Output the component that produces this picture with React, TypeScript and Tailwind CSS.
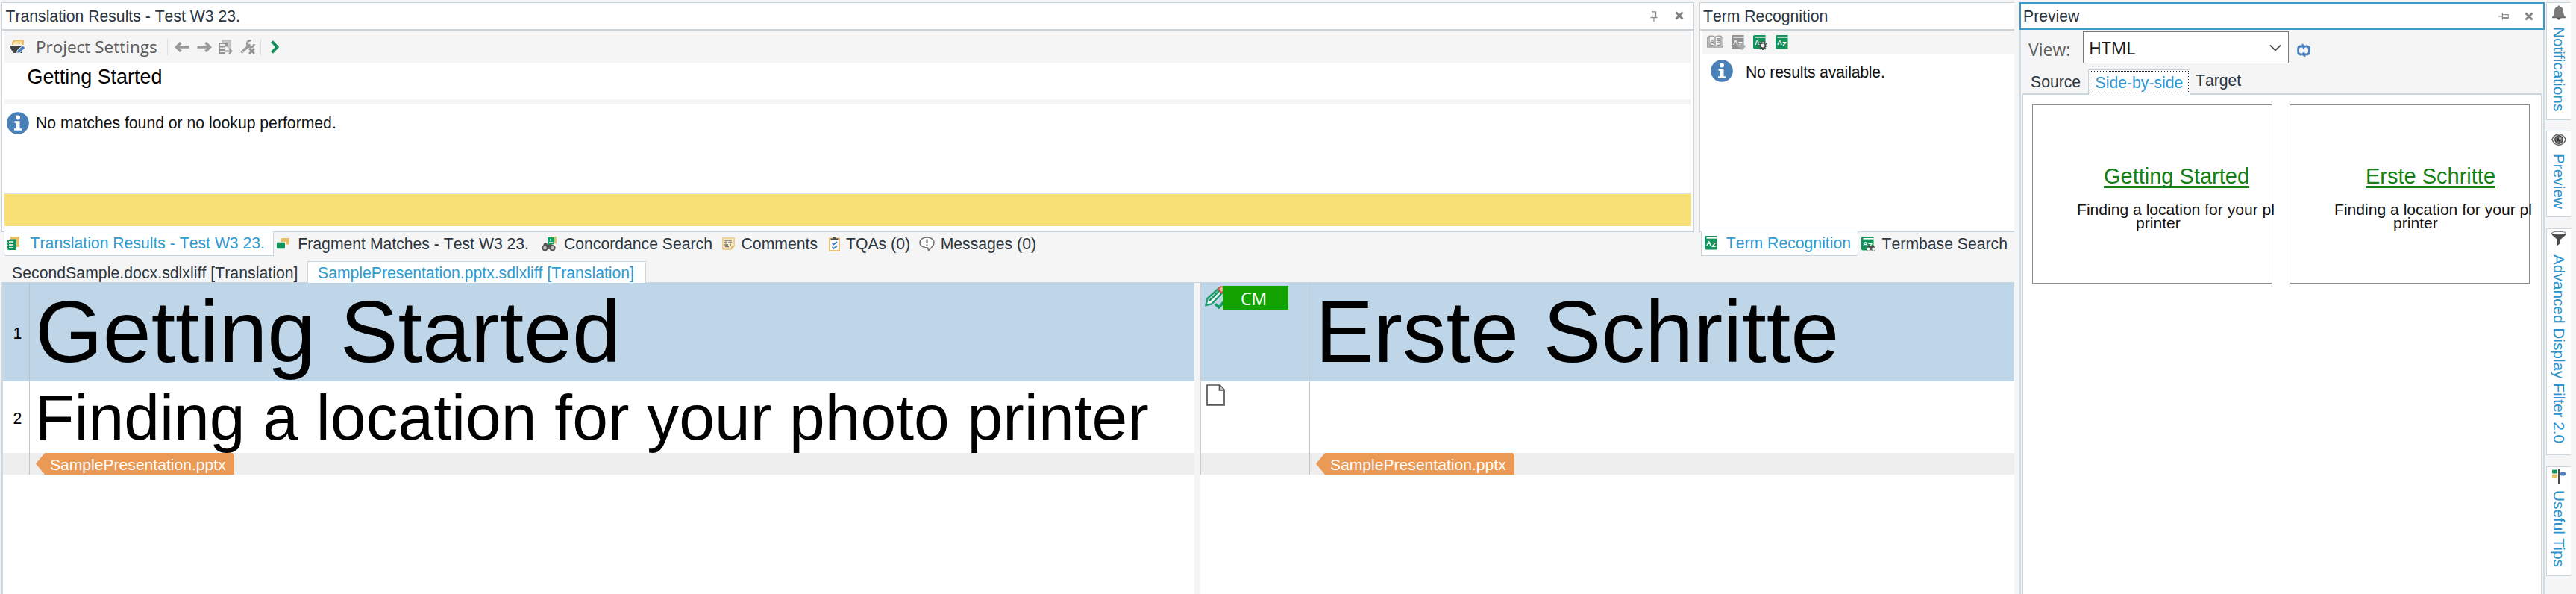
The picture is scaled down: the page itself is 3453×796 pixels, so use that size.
import React from "react";

const ARIAL = "font-['Liberation_Sans',Arial,sans-serif]";
const SEGOE = "font-['Open_Sans','Noto_Sans',sans-serif]";

function Info() {
  return (
    <svg width="30" height="30" viewBox="0 0 30 30" className="shrink-0">
      <circle cx="15" cy="15" r="14.8" fill="#4a80b8" />
      <circle cx="15" cy="7.6" r="3" fill="#fff" />
      <path d="M10.5 12.2h7v10h2.8v2.6H10v-2.6h3v-7.4h-2.5z" fill="#fff" />
    </svg>
  );
}

function Cross() {
  return (
    <svg width="12" height="12" viewBox="0 0 12 12" className="shrink-0">
      <path d="M1.5 1.5l9 9M10.5 1.5l-9 9" stroke="#828282" strokeWidth="3" />
    </svg>
  );
}

function Pin({ side }: { side?: boolean }) {
  return (
    <svg width="14" height="14" viewBox="0 0 14 14" className={side ? "shrink-0 rotate-90" : "shrink-0"}>
      <path d="M4 .8h6M4.6 .8v7.4M8.5 .8v7.4M9.6 .8v7.4M2.5 8.6h9M7 8.6V14" stroke="#8a8a8a" strokeWidth="1.2" fill="none" />
    </svg>
  );
}

function Folder() {
  return (
    <svg width="21" height="20" viewBox="0 0 21 20" className="shrink-0">
      <path d="M4 7V4l2-2.5h12V7" fill="#fbefcf" stroke="#e6bd5e" strokeWidth="1.8" />
      <path d="M5 4.5h12" stroke="#e6bd5e" strokeWidth="1.4" />
      <path d="M0 8h19l-3 10H5.500Q2 15 0 8z" fill="#454545" />
      <path d="M9.500 18.500l1-4.500 7-6 3.500 3-7.500 6.800z" fill="#4a80c0" stroke="#f5f5f5" strokeWidth="1" />
    </svg>
  );
}

function Arrow({ right }: { right?: boolean }) {
  return (
    <svg width="20" height="14" viewBox="0 0 20 14" className={right ? "shrink-0 rotate-180" : "shrink-0"}>
      <path d="M8.500 1L2.500 7l6 6M3 7h16.500" stroke="#9a9a9a" strokeWidth="3.600" fill="none" />
    </svg>
  );
}

function Apply() {
  return (
    <svg width="19" height="20" viewBox="0 0 19 20" className="shrink-0">
      <path d="M5 4V1h11v13" fill="#c8c8c8" stroke="#bdbdbd" strokeWidth="1.500" />
      <path d="M0 4h12v5.500H9V19H0z" fill="#949494" />
      <path d="M2 7h7M2 11.500h6M2 16h6" stroke="#f0f0f0" strokeWidth="1.800" />
      <path d="M9 15.500h8M14 12l3.500 3.500L14 19" stroke="#949494" strokeWidth="2" fill="none" />
    </svg>
  );
}

function Wrench() {
  return (
    <svg width="20" height="20" viewBox="0 0 20 20" className="shrink-0">
      <path d="M2.500 16.500L12 7.500" stroke="#9a9a9a" strokeWidth="3.600" strokeLinecap="round" />
      <path d="M15 1.200A4.600 4.600 0 1 0 18.500 6" stroke="#9a9a9a" strokeWidth="3" fill="none" />
      <circle cx="3" cy="16" r="1" fill="#f5f5f5" />
      <path d="M12 12l7 7M19 12l-7 7" stroke="#949494" strokeWidth="2.600" />
    </svg>
  );
}

function OpenBook() {
  return (
    <svg width="22" height="18" viewBox="0 0 22 18" className="shrink-0">
      <path d="M3 1.500Q7.500 .500 11 2.500Q14.500 .500 19 1.500V13Q14.500 13 11 15Q7.500 13 3 13zM11 2.500V15" fill="#f0f0f0" stroke="#9a9a9a" strokeWidth="1.400" />
      <path d="M.8 3V16H21.200V3" fill="none" stroke="#a0a0a0" strokeWidth="1.500" />
      <path d="M13 5h4.500M13 7.500h4.500M13 10h4.500" stroke="#8a8a8a" strokeWidth="1.400" />
      <text x="3.400" y="11.500" fontSize="9.500" fontWeight="700" fill="#8a8a8a" fontFamily="Liberation Sans">A</text>
    </svg>
  );
}

function AzBook({ gray, extra }: { gray?: boolean; extra?: "plus" | "gear" | "find" }) {
  const c = gray ? "#929292" : "#12935c";
  return (
    <svg width="19" height="20" viewBox="0 0 19 20" className="shrink-0">
      <path d="M0 2Q0 0 2 0h14.500v18.500H2Q0 18.500 0 16.500z" fill={c} />
      <path d="M2.500 2.800h14" stroke="#fff" strokeWidth="1.700" />
      <text x="2" y="12.600" fontSize="9.500" fontWeight="700" fill="#fff" fontFamily="Liberation Sans">A</text>
      <text x="9" y="15" fontSize="9.500" fontWeight="700" fill="#fff" fontFamily="Liberation Sans">Z</text>
      {extra === "plus" && <path d="M13.500 10.500v9M9 15h9.500" stroke="#a9a9a9" strokeWidth="3.200" />}
      {extra === "gear" && (
        <g>
          <circle cx="13" cy="14" r="5.400" fill="none" stroke="#4a4a4a" strokeWidth="1.700" strokeDasharray="2 1.700" />
          <circle cx="13" cy="14" r="3.400" fill="#f5f5f5" stroke="#4a4a4a" strokeWidth="2" />
        </g>
      )}
      {extra === "find" && (
        <g>
          <path d="M7 18l2-6h3l1 1 1-1h3l2 6z" fill="#4a4a4a" />
          <circle cx="9.500" cy="17" r="2.300" fill="#f5f5f5" stroke="#8a8a8a" />
          <circle cx="16.300" cy="17" r="2.300" fill="#f5f5f5" stroke="#8a8a8a" />
        </g>
      )}
    </svg>
  );
}

function ResultsIcon() {
  return (
    <svg width="17" height="19" viewBox="0 0 17 19" className="shrink-0">
      <path d="M5 0h12v14h-5V4H5z" fill="#e8be68" />
      <path d="M3.500 3.500H13V18H1.500V15H0V13h1.500v-2H0V9h1.500V7H0V5h3.500z" fill="#12935c" />
      <path d="M3 7h6M3 11h6M3 15h6" stroke="#fff" strokeWidth="1.700" />
    </svg>
  );
}

function FragmentIcon() {
  return (
    <svg width="17" height="15" viewBox="0 0 17 15" className="shrink-0">
      <path d="M5.500 0H17v8.500h-5V5H5.500z" fill="#e8be68" />
      <rect x="0" y="5.800" width="11" height="8.500" rx="1" fill="#12935c" />
    </svg>
  );
}

function ConcordanceIcon() {
  return (
    <svg width="20" height="20" viewBox="0 0 20 20" className="shrink-0">
      <path d="M12 0h8v9h-4v3h-4z" fill="#e8be68" />
      <path d="M8 1h9v9h-3l-2 3H8z" fill="#12a06a" />
      <path d="M12 3v3M10 8h5" stroke="#fff" strokeWidth="1.300" />
      <path d="M3 9l3-1 3 3 3-1 5 3 1 4H1z" fill="#5a5a5a" />
      <circle cx="4.500" cy="15.200" r="3.300" fill="#bbb" stroke="#555" strokeWidth="1.800" />
      <circle cx="14.500" cy="15.200" r="3.300" fill="#bbb" stroke="#555" strokeWidth="1.800" />
    </svg>
  );
}

function CommentsIcon() {
  return (
    <svg width="17" height="17" viewBox="0 0 17 17" className="shrink-0">
      <path d="M.8 .8h15.400v11l-4 4.400H.8z" fill="#fbe9c0" stroke="#ecc67c" strokeWidth="1.300" />
      <path d="M3 4h10M3 7h3M8 7h5M3 10h5M10 10h2M4 12.500h5" stroke="#757575" strokeWidth="1.700" />
      <path d="M5 3.500v9M11 3.500v6" stroke="#8d8d8d" strokeWidth="1" />
      <path d="M12 16v-4h4z" fill="#e8be68" />
    </svg>
  );
}

function TqaIcon() {
  return (
    <svg width="15" height="20" viewBox="0 0 15 20" className="shrink-0">
      <rect x="1" y="2.500" width="13" height="16.500" fill="#fff" stroke="#e8b95c" strokeWidth="1.700" />
      <path d="M2.500 4.800V2.500H5V0h5v2.500h2.500v2.300z" fill="#4f4f4f" />
      <path d="M4.500 8.500l2 2 4.500-3.500M4.500 14l2 2 4.500-3.500" stroke="#3f7fc0" strokeWidth="2" fill="none" />
    </svg>
  );
}

function MessageIcon() {
  return (
    <svg width="21" height="20" viewBox="0 0 21 20" className="shrink-0">
      <path d="M8 14.500C3 13.500 1 11 1 8c0-4 4-7 9.500-7S20 4 20 8c0 4-3 6.500-7.500 10.500L11.500 15z" fill="#fff" stroke="#787878" strokeWidth="1.600" />
      <path d="M10.500 3.500v5.500M10.500 10.500v2" stroke="#5f5f5f" strokeWidth="2" />
    </svg>
  );
}

function Refresh() {
  return (
    <svg width="18" height="19" viewBox="0 0 18 19" className="shrink-0">
      <path d="M6.500 15H5Q1.600 14.500 1.600 11.500V7.500Q1.600 4 5.500 4H8" fill="none" stroke="#4a80bd" strokeWidth="2.800" />
      <path d="M11.500 4H13Q16.400 4.500 16.400 7.500v4q0 3.500-3.900 3.500H10" fill="none" stroke="#4a80bd" strokeWidth="2.800" />
      <path d="M6.500 0l6 4-4.500 4.500zM11.500 19l-6-4L10 10.500z" fill="#4a80bd" />
    </svg>
  );
}

function PencilCheck() {
  return (
    <svg width="25" height="31" viewBox="0 0 25 31" className="shrink-0">
      <path d="M1.500 26l2-9L19 3l5 5.500L9 24.500z" fill="#f4fbf8" stroke="#1b9a6c" strokeWidth="2.400" />
      <path d="M6 20L20 6" stroke="#1b9a6c" strokeWidth="2.600" />
      <path d="M18 4l3.500-3 3.500 1v5l-3 2z" fill="#f4b0a8" stroke="#d9534a" strokeWidth="1.800" />
      <path d="M14 24.500l5 4.500 6-7" fill="none" stroke="#1b9a6c" strokeWidth="3.600" />
    </svg>
  );
}

function PageIcon() {
  return (
    <svg width="25" height="29" viewBox="0 0 25 29" className="shrink-0">
      <path d="M1 1h17l6 6v20.800H1z" fill="#fff" stroke="#555" strokeWidth="1.700" />
      <path d="M17.500 1v7H24" fill="#bbb" stroke="#555" strokeWidth="1.700" />
    </svg>
  );
}

function Bell() {
  return (
    <svg width="18" height="20" viewBox="0 0 18 20" className="shrink-0">
      <path d="M9 0l2 2q4 1 4 6 0 5 3 8H0q3-3 3-8 0-5 4-6z" fill="#7a7a7a" />
      <path d="M6 17h6l-3 3z" fill="#4a4a4a" />
      <path d="M0 16.500h18" stroke="#6b6b6b" strokeWidth="1.500" />
    </svg>
  );
}

function Eye() {
  return (
    <svg width="20" height="16" viewBox="0 0 20 16" className="shrink-0">
      <path d="M.8 8Q4 .800 10 .800T19.200 8Q16 15.200 10 15.200T.8 8z" fill="#fff" stroke="#666" strokeWidth="1.500" />
      <circle cx="10" cy="8" r="5.200" fill="#777" stroke="#444" strokeWidth="1.500" />
      <circle cx="10" cy="8" r="2.600" fill="#333" />
      <circle cx="11.500" cy="6.500" r="1.300" fill="#eee" />
    </svg>
  );
}

function Funnel() {
  return (
    <svg width="20" height="19" viewBox="0 0 20 19" className="shrink-0">
      <path d="M0 2h20l-1 3-7 6v5l-4 3v-8L1 5z" fill="#4a4a4a" />
      <ellipse cx="10" cy="2.200" rx="9.500" ry="1.900" fill="#fff" stroke="#777" strokeWidth="1" />
    </svg>
  );
}

function TipsIcon() {
  return (
    <svg width="18" height="19" viewBox="0 0 18 19" className="shrink-0">
      <rect x="0" y="0.500" width="7" height="5" rx="1" fill="#12935c" />
      <rect x="0" y="6.500" width="7" height="4.500" rx="1" fill="#e8be68" />
      <rect x="11" y="3.500" width="7" height="5" rx="2" fill="#4a80c0" />
      <rect x="8" y="0" width="2.600" height="19" fill="#4a4a4a" />
    </svg>
  );
}

function Tag() {
  return (
    <div className="h-[29px] w-[266px] bg-[#eb9a56] pl-[19px] text-[21.1px] leading-[31px] text-white [clip-path:polygon(0_50%,12px_0,264px_0,100%_3px,100%_100%,12px_100%)]">
      SamplePresentation.pptx
    </div>
  );
}

function BottomTab({ icon, label, className }: { icon: React.ReactNode; label: string; className: string }) {
  return (
    <div className={"flex shrink-0 items-center " + className}>
      {icon}
      <span className="ml-auto">{label}</span>
    </div>
  );
}

function TranslationResults() {
  return (
    <section className="flex h-[308px] w-[2269px] flex-col border border-b-2 border-[#c9d5dc] bg-white">
      <header className="flex h-[37px] shrink-0 items-center border-b-2 border-[#c9d3d9] pr-[13px] pl-[4.500px]">
        <span>Translation Results - Test W3 23.</span>
        <span className="ml-auto flex gap-[21px]"><Pin /><Cross /></span>
      </header>
      <div className="mx-[3px] flex h-[43px] items-center bg-[#f5f5f5] pl-[7px]">
        <Folder />
        <span className={"ml-[14px] w-[163px] text-[22.500px] text-[#5a5a5a] " + SEGOE}>Project Settings</span>
        <span className="ml-[13px] h-[22px] w-px bg-[#dedede]" />
        <span className="ml-[9px] flex items-center gap-[9.500px]"><Arrow /><Arrow right /><Apply /><Wrench /></span>
        <span className="ml-[7px] h-[22px] w-px bg-[#dedede]" />
        <svg width="12" height="18" viewBox="0 0 12 18" className="ml-[13px]">
          <path d="M1.500 1.500L8.500 9l-7 7.500" fill="none" stroke="#12935c" strokeWidth="4" />
        </svg>
      </div>
      <div className="mx-[3px] h-[49px] pl-[30.500px] text-[26.900px] leading-[39px] text-black">Getting Started</div>
      <div className="mx-[3px] h-[7px] bg-[#f5f5f5]" />
      <div className="mx-[3px] flex h-[118px] items-start gap-[9px] pt-[10px] pl-[3px] text-[21.200px] leading-[30px] text-[#111]">
        <Info />No matches found or no lookup performed.
      </div>
      <div className="mx-[3px] h-[45px] border-t-2 border-[#dbe6ec] bg-[#f8e076]" />
    </section>
  );
}

function TermRecognition() {
  return (
    <section className="h-[308px] w-[422px] border border-r-0 border-b-2 border-[#c9d5dc] bg-white">
      <header className="flex h-[37px] items-center border-b-2 border-[#c9d3d9] pl-[4px]">Term Recognition</header>
      <div className="ml-[3px] flex h-[31px] items-start gap-[10.500px] bg-[#f5f5f5] pt-[6px] pl-[6px]">
        <OpenBook /><AzBook gray extra="plus" /><AzBook extra="gear" /><AzBook />
      </div>
      <div className="flex gap-[17px] pt-[8px] pl-[14px] leading-[34px] tracking-[-0.200px] text-[#111]"><Info />No results available.</div>
    </section>
  );
}

function Segments() {
  return (
    <div className="flex w-[2698px] flex-1 bg-white text-black">
      <div className="flex w-[1599px] flex-col border-l-2 border-[#cbdae3]">
        <div className="flex h-[132px] bg-[#bed6e8]">
          <div className="flex w-[36px] items-center justify-center border-r border-[#b9c3c9] pt-1 pl-[4px] text-[21.300px]">1</div>
          <div className="pl-[7px] text-[116.700px] leading-[132px] whitespace-nowrap">Getting Started</div>
        </div>
        <div className="flex h-[96px]">
          <div className="flex w-[36px] items-center justify-center border-r border-[#c5c5c5] pt-1 pl-[4px] text-[21.300px]">2</div>
          <div className="pl-[7px] text-[85.800px] leading-[96px] whitespace-nowrap">Finding a location for your photo printer</div>
        </div>
        <div className="flex h-[29px] bg-[#eeeeee]">
          <div className="w-[36px] border-r border-[#c5c5c5]" />
          <div className="pl-[8px]"><Tag /></div>
        </div>
      </div>
      <div className="w-[8px] bg-[#f5f5f5]" />
      <div className="flex flex-1 flex-col">
        <div className="flex h-[132px] border-l border-[#cccccc] bg-[#bed6e8]">
          <div className="flex w-[146px] items-start border-r border-[#c2ccd2] pt-[4px] pl-[5px]">
            <PencilCheck />
            <div className={"h-[32px] w-[88px] -ml-px bg-[#12a300] pr-[5px] text-center text-[23px] leading-[35px] text-white " + SEGOE}>CM</div>
          </div>
          <div className="pl-[7px] text-[117px] leading-[132px] whitespace-nowrap">Erste Schritte</div>
        </div>
        <div className="flex h-[96px] border-l border-[#cccccc]">
          <div className="w-[146px] border-r border-[#c5c5c5] pt-[4px] pl-[7px]"><PageIcon /></div>
        </div>
        <div className="flex h-[29px] border-l border-[#cccccc] bg-[#eeeeee]">
          <div className="w-[146px] border-r border-[#c5c5c5]" />
          <div className="pl-[8px]"><Tag /></div>
        </div>
      </div>
    </div>
  );
}

function Card({ title, className, textClass }: { title: string; className: string; textClass: string }) {
  return (
    <div className={"h-[240px] w-[322px] shrink-0 border border-[#8c8c8c] pt-[80px] text-[#111] " + className}>
      <div className={"h-[31px] w-fit border-b-[3px] border-[#138013] text-[29px] leading-[30px] whitespace-nowrap text-[#138013] " + textClass}>{title}</div>
      <div className="mt-[20px] ml-[60px] w-[265px] text-[21.100px] leading-[18px]">
        <div className="-ml-px whitespace-nowrap">Finding a location for your pl</div>
        <div className="pl-[78px]">printer</div>
      </div>
    </div>
  );
}

function Preview() {
  return (
    <section className="mt-[3px] ml-[7px] flex h-[793px] w-[704px] flex-col">
      <header className="flex h-[37px] shrink-0 items-center border-2 border-[#3b9ccb] bg-white pr-[13px] pl-[3px]">
        <span>Preview</span>
        <span className="ml-auto flex items-center gap-[21px]"><Pin side /><Cross /></span>
      </header>
      <div className="flex flex-1 flex-col border-x-2 border-[#d0dde4] pr-[2px] pl-[2px]">
        <div className="flex h-[47px] items-start pt-[2px]">
          <span className={"mt-[2px] ml-[8px] w-[73px] text-[23px] leading-[44px] text-[#5f5f5f] " + SEGOE}>View:</span>
          <div className={"flex h-[43px] w-[276px] items-center justify-between border border-[#7a7a7a] bg-white pr-[9px] pl-[7px] text-[23px] text-[#1a1a1a] " + SEGOE}>
            HTML
            <svg width="16" height="10" viewBox="0 0 16 10"><path d="M1 1.500l7 7 7-7" fill="none" stroke="#555" strokeWidth="1.800" /></svg>
          </div>
          <div className="mt-[16px] ml-[11px]"><Refresh /></div>
        </div>
        <div className="flex h-[38px] items-end">
          <div className="w-[88px] pl-[11px] leading-[30px]">Source</div>
          <div className="z-10 -mb-[2px] h-[34px] w-[137px] border border-b-0 border-[#c5d3da] bg-white p-px text-[#2f97d2]">
            <div className="h-[30px] border-[1.500px] border-dotted border-[#222] text-center leading-[30px]">Side-by-side</div>
          </div>
          <div className="pl-[7px] leading-[34px]">Target</div>
        </div>
        <div className="flex flex-1 items-start border-x border-t-2 border-[#c9d8df] bg-white pt-[13px] pl-[12px]">
          <Card title="Getting Started" className="" textClass="ml-[95px]" />
          <Card title="Erste Schritte" className="ml-[23px]" textClass="ml-[101px]" />
        </div>
      </div>
    </section>
  );
}

function SideTab({ icon, label, className, textClass }: { icon: React.ReactNode; label: string; className: string; textClass: string }) {
  return (
    <div className={"flex w-[33px] shrink-0 flex-col items-center border border-r-0 border-[#c9d5dc] bg-white pt-[3px] text-[#2b92cc] " + className}>
      {icon}
      <span className={"whitespace-nowrap [writing-mode:vertical-rl] " + textClass}>{label}</span>
    </div>
  );
}

export default function App() {
  return (
    <div className={"flex h-[796px] w-[3453px] overflow-hidden bg-[#f5f5f5] text-[21.200px] leading-[24px] whitespace-nowrap text-[#2b3540] [font-kerning:none] " + ARIAL}>
      <div className="flex w-[2700px] flex-col pl-[2px]">
        <div className="flex shrink-0 gap-[7px] pt-[3px]">
          <TranslationResults />
          <TermRecognition />
        </div>
        <div className="flex h-[39px] shrink-0 items-start">
          <BottomTab icon={<ResultsIcon />} label="Translation Results - Test W3 23." className="-mt-[2px] ml-[3px] h-[34px] w-[362px] border border-[#c9d5dc] bg-white pr-[11px] pl-[3px] text-[#2f9bd0]" />
          <BottomTab icon={<FragmentIcon />} label="Fragment Matches - Test W3 23." className="ml-[4px] h-[31px] w-[338px]" />
          <BottomTab icon={<ConcordanceIcon />} label="Concordance Search" className="ml-[17px] h-[31px] w-[229px]" />
          <BottomTab icon={<CommentsIcon />} label="Comments" className="ml-[13px] h-[31px] w-[128px]" />
          <BottomTab icon={<TqaIcon />} label="TQAs (0)" className="ml-[15px] h-[31px] w-[109px]" />
          <BottomTab icon={<MessageIcon />} label="Messages (0)" className="ml-[12px] h-[31px] w-[157px]" />
          <BottomTab icon={<AzBook />} label="Term Recognition" className="-mt-[2px] ml-auto h-[34px] w-[211px] border border-[#c9d5dc] bg-white pr-[9px] pl-[4px] text-[#2f9bd0]" />
          <BottomTab icon={<AzBook extra="find" />} label="Termbase Search" className="mr-[9px] ml-[4px] h-[31px] w-[196px]" />
        </div>
        <div className="flex h-[29px] shrink-0 border-b border-[#c9d5dc]">
          <div className="w-[410px] pl-[14px] leading-[32px] tracking-[0.050px]">SecondSample.docx.sdlxliff [Translation]</div>
          <div className="h-[30px] w-[454px] border border-b-0 border-[#c9d5dc] bg-white pl-[13px] leading-[30px] text-[#2f9bd0]">SamplePresentation.pptx.sdlxliff [Translation]</div>
        </div>
        <Segments />
      </div>
      <Preview />
      <aside className="ml-[2px] flex flex-col pt-[3px] text-[20.800px]">
        <SideTab icon={<Bell />} label="Notifications" className="h-[158px]" textClass="mt-[9px]" />
        <SideTab icon={<Eye />} label="Preview" className="mt-[14px] h-[116px]" textClass="mt-[11px]" />
        <SideTab icon={<Funnel />} label="Advanced Display Filter 2.0" className="mt-[15px] h-[304px]" textClass="mt-[12px]" />
        <SideTab icon={<TipsIcon />} label="Useful Tips" className="mt-[15px] h-[147px]" textClass="mt-[9px]" />
      </aside>
    </div>
  );
}
